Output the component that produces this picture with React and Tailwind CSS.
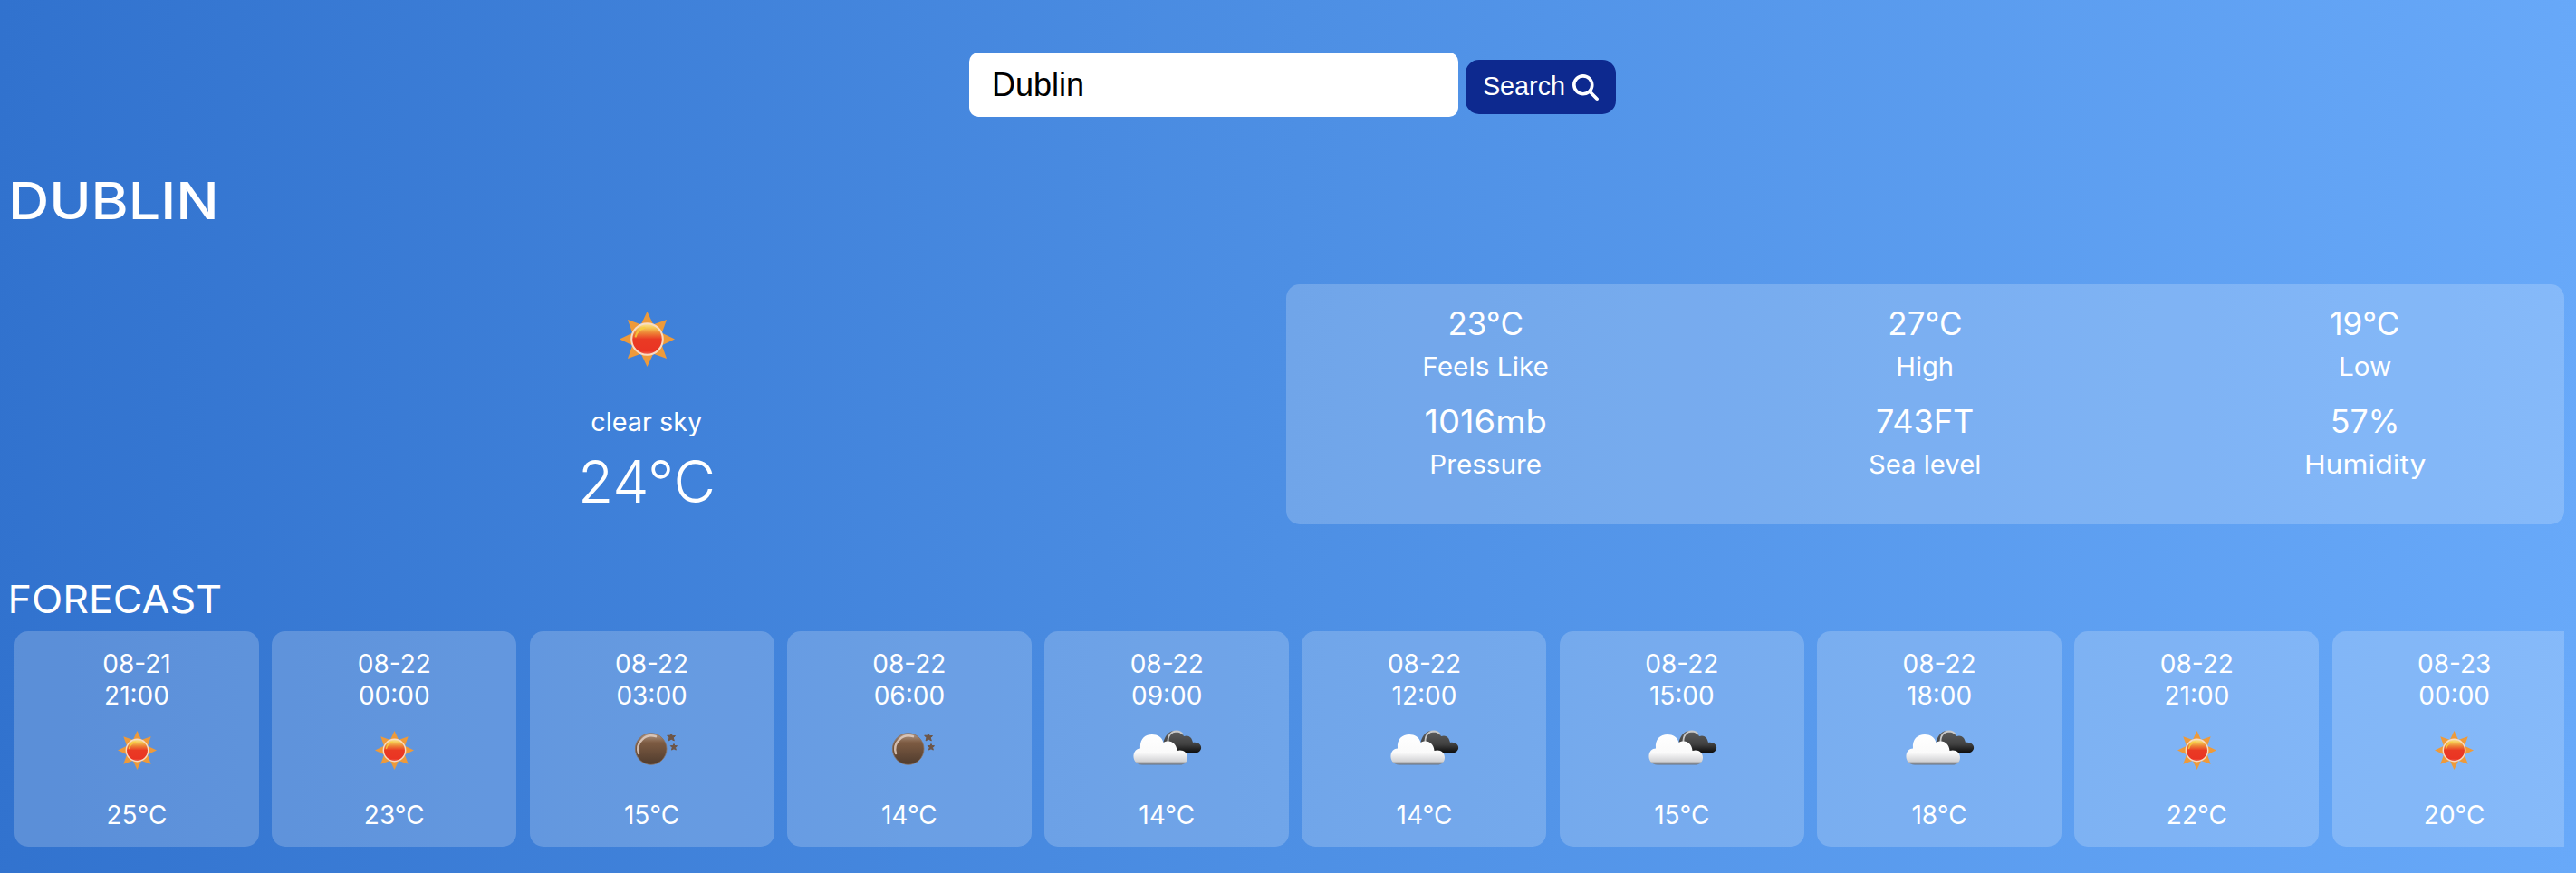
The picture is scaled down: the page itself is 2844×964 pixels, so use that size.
import { FaMagnifyingGlass } from "react-icons/fa6";

const stats = [
  ["23°C", "Feels Like", "", "scale-x-[1.065]"],
  ["27°C", "High", "", "scale-x-[1.04]"],
  ["19°C", "Low", "", "scale-x-[1.06]"],
  ["1016mb", "Pressure", "scale-x-[1.09]", "scale-x-[1.06]"],
  ["743FT", "Sea level", "scale-x-[1.03]", "scale-x-[1.045]"],
  ["57%", "Humidity", "scale-x-[1.02]", "scale-x-[1.14]"],
];

const forecast = [
  ["08-21", "21:00", "sun", "25°C"],
  ["08-22", "00:00", "sun", "23°C"],
  ["08-22", "03:00", "moon", "15°C"],
  ["08-22", "06:00", "moon", "14°C"],
  ["08-22", "09:00", "cloud", "14°C"],
  ["08-22", "12:00", "cloud", "14°C"],
  ["08-22", "15:00", "cloud", "15°C"],
  ["08-22", "18:00", "cloud", "18°C"],
  ["08-22", "21:00", "sun", "22°C"],
  ["08-23", "00:00", "sun", "20°C"],
];

function Defs() {
  return (
    <svg className="absolute size-0" aria-hidden="true">
      <defs>
        <linearGradient id="sunFill" x1="0" y1="0" x2="0" y2="1">
          <stop offset="0" stopColor="#fbe79a" />
          <stop offset="0.15" stopColor="#f5c453" />
          <stop offset="0.3" stopColor="#ee8436" />
          <stop offset="0.5" stopColor="#ea3a24" />
          <stop offset="0.88" stopColor="#ea3423" />
          <stop offset="1" stopColor="#f0705c" />
        </linearGradient>
        <linearGradient id="moonFill" x1="0" y1="0" x2="0" y2="1">
          <stop offset="0" stopColor="#b39a88" />
          <stop offset="0.3" stopColor="#7d5b42" />
          <stop offset="1" stopColor="#4f3b2d" />
        </linearGradient>
        <linearGradient id="cloudFill" x1="0" y1="0" x2="0" y2="1">
          <stop offset="0" stopColor="#ffffff" />
          <stop offset="0.6" stopColor="#fafafa" />
          <stop offset="0.88" stopColor="#d4d4d6" />
          <stop offset="0.96" stopColor="#8b8f96" />
          <stop offset="1" stopColor="#6d747e" />
        </linearGradient>
        <linearGradient id="darkFill" x1="0" y1="0" x2="0" y2="1">
          <stop offset="0" stopColor="#5e5e5e" />
          <stop offset="0.6" stopColor="#404040" />
          <stop offset="1" stopColor="#080808" />
        </linearGradient>
      </defs>
    </svg>
  );
}

function Sun({ className }) {
  return (
    <svg viewBox="-30 -30 60 60" className={className}>
      {[0, 45, 90, 135, 180, 225, 270, 315].map((a) => (
        <path key={a} d="M0 -30 L8 -13 L-8 -13 Z" fill="#ee9a3a" transform={`rotate(${a})`} />
      ))}
      <circle r="17" fill="url(#sunFill)" stroke="#f8dcc4" strokeWidth="2" />
      <path d="M-12.5 -3 A13 13 0 0 1 -3 -12.5" fill="none" stroke="#f7cf3c" strokeWidth="2.2" strokeLinecap="round" opacity="0.8" />
    </svg>
  );
}

function Moon() {
  return (
    <svg viewBox="6 0 100 100" className="size-[100px]">
      <circle cx="54.7" cy="49" r="17.3" fill="url(#moonFill)" stroke="#8a6e5a" strokeWidth="0.8" />
      <path d="M41 54 A15 15 0 0 1 60 35.2" fill="none" stroke="#e2cfc3" strokeWidth="2.4" strokeLinecap="round" opacity="0.85" />
      <path d="M77 32 l1.3 2.6 3.2 0 -2.2 2.1 1 3.2 -3.1 -1.7 -3.1 1.7 0.8 -3.2 -2.2 -2.6 3.2 0.2z" fill="#6d5546" stroke="#6d5546" />
      <path d="M80 43.5 l0.9 2 2.6 0.2 -1.9 1.8 0.7 2.6 -2.3 -1.3 -2.5 1.3 0.7 -2.6 -1.9 -1.9 2.6 -0.1z" fill="#6d5546" stroke="#6d5546" />
    </svg>
  );
}

function Clouds() {
  return (
    <svg viewBox="-1 0 100 100" className="size-[100px]">
      <path d="M46 54 C43 42 48 29 58 29 C63 29 66 31 68 35 C73 33 77 36 78 42 C84 41 88 45 87 49 C86 52 83 53.500 80 53.500 Z" fill="url(#darkFill)" />
      <path d="M50.500 42 C50 34 54 29.800 60 29.500 C63 29.500 65 30.500 67 33" fill="none" stroke="#c9c9c9" strokeWidth="1.800" />
      <path d="M22 66.500 C15 66.500 12 61 12.500 56 C13 51.500 16 48.500 20 48.500 C19 38 25 33 33 33 C39 33 44 36 45.500 42 C53 38 60 43 60.500 51 C67 49 72 53 72 58.500 C72 64 68 66.500 64 66.500 Z" fill="url(#cloudFill)" />
    </svg>
  );
}

function Icon({ kind }) {
  if (kind === "sun") return <Sun className="size-[43px]" />;
  if (kind === "moon") return <Moon />;
  return <Clouds />;
}

export default function App() {
  return (
    <div className="flex h-[964px] w-full flex-col overflow-hidden bg-[linear-gradient(92deg,#3172ce,#4d8fe4_50%,#68a9f9)] pr-[13px] font-[Inter,sans-serif] text-white">
      <Defs />
      <form className="mt-[58px] flex h-[71px] shrink-0 items-center gap-2 pl-[1070px]">
        <input
          defaultValue="Dublin"
          className="h-[71px] w-[540px] rounded-[10px] bg-white px-[25px] font-['Liberation_Sans',sans-serif] text-[36px] text-black outline-none"
        />
        <button
          type="button"
          className="mt-[5px] flex h-[60px] w-[166px] items-center justify-center gap-2 rounded-[15px] bg-[#0d298f] font-['Liberation_Sans',sans-serif] text-[28.8px]"
        >
          Search
          <FaMagnifyingGlass className="size-[29px]" />
        </button>
      </form>

      <h1 className="mt-[58px] h-[70px] origin-left scale-x-[1.11] pl-[8px] text-[56.500px] leading-[70px] font-medium">DUBLIN</h1>

      <main className="mt-[57px] flex h-[265px] shrink-0">
        <section className="flex w-[1420px] shrink-0 flex-col items-center pt-[30px] pl-2">
          <Sun className="size-[61px]" />
          <p className="mt-[43px] scale-x-[1.03] text-[28px] leading-[36px]">clear sky</p>
          <p className="mt-[10px] text-[64px] leading-[76px] font-light">24°C</p>
        </section>
        <section className="grid h-[265px] w-[1411px] grid-cols-3 content-start gap-x-[85px] gap-y-[14px] rounded-[15px] bg-white/20 px-5 pt-[21px] text-center">
          {stats.map(([v, l, vScale, lScale]) => (
            <div key={l} className="h-[93.500px]">
              <p className={`text-[35px] leading-[44px] ${vScale}`}>{v}</p>
              <p className={`mt-[8px] text-[28px] leading-[36px] ${lScale}`}>{l}</p>
            </div>
          ))}
        </section>
      </main>

      <h2 className="mt-[58px] h-[50px] shrink-0 origin-left scale-x-[1.065] pl-[8px] text-[42px] leading-[50px]">FORECAST</h2>
      <section className="mt-[10px] flex h-[238px] shrink-0 gap-[14.300px] overflow-hidden pl-4">
        {forecast.map(([d, t, icon, temp]) => (
          <article key={d + t} className="flex h-[238px] w-[270px] shrink-0 flex-col items-center rounded-[15px] bg-white/20 pt-[19px] text-[28px] leading-[35px]">
            <p>{d}</p>
            <p>{t}</p>
            <div className="flex h-[84px] items-center justify-center">
              <Icon kind={icon} />
            </div>
            <p className="mt-[13px]">{temp}</p>
          </article>
        ))}
      </section>
    </div>
  );
}
